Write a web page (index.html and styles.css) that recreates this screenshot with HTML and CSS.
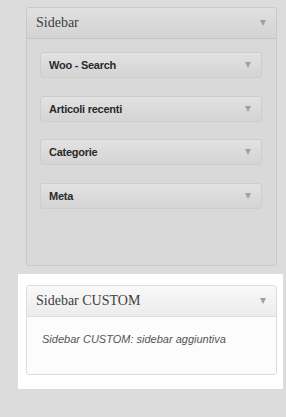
FILE: index.html
```html
<!DOCTYPE html>
<html>
<head>
    <title>Widget</title>
    <link rel="stylesheet" href="styles.css">
</head>
<body>
    <div class="sidebar-box">
        <div class="box-head">
            <h3>Sidebar</h3>
            <span class="arrow"></span>
        </div>
        <div class="box-body">
            <div class="widget"><span>Woo - Search</span><span class="arrow"></span></div>
            <div class="widget"><span>Articoli recenti</span><span class="arrow"></span></div>
            <div class="widget"><span>Categorie</span><span class="arrow"></span></div>
            <div class="widget"><span>Meta</span><span class="arrow"></span></div>
        </div>
    </div>
    <div class="highlight">
        <div class="custom-box">
            <div class="box-head">
                <h3>Sidebar CUSTOM</h3>
                <span class="arrow"></span>
            </div>
            <div class="custom-body">
                <p>Sidebar CUSTOM: sidebar aggiuntiva</p>
            </div>
        </div>
    </div>
</body>
</html>
```

FILE: styles.css
```css
body {
    margin: 0;
    background-color: #dcdcdc;
    font-family: "Liberation Sans", Arial, sans-serif;
}

.sidebar-box {
    margin: 7px 9px 0 26px;
    height: 257px;
    border: 1px solid #c8c8c8;
    border-radius: 3px;
    background-color: #d9d9d9;
}

.box-head {
    display: flex;
    align-items: center;
    justify-content: space-between;
    height: 30px;
    padding: 0 10px 0 9px;
    border-bottom: 1px solid #c6c6c6;
    background: linear-gradient(#e0e0e0, #d3d3d3);
    border-radius: 3px 3px 0 0;
}

.box-head h3 {
    margin: 0;
    font-family: "Liberation Serif", "Times New Roman", serif;
    font-weight: normal;
    font-size: 14px;
    color: #3f3f3f;
}

.arrow {
    width: 0;
    height: 0;
    border-left: 3.5px solid transparent;
    border-right: 3.5px solid transparent;
    border-top: 6px solid #a0a0a0;
}

.box-body {
    padding: 13px 14px 0 13px;
}

.widget {
    display: flex;
    align-items: center;
    justify-content: space-between;
    height: 24px;
    margin-bottom: 17.5px;
    padding: 0 10px 0 8px;
    border: 1px solid #cdcdcd;
    border-radius: 3px;
    background: linear-gradient(#e2e2e2, #d4d4d4);
    font-size: 11px;
    font-weight: bold;
    letter-spacing: -0.25px;
    color: #2a2a2a;
}

.highlight {
    margin: 8px 3px 0 18px;
    padding: 11px 6px 14px 8px;
    background-color: #fff;
}

.custom-box {
    border: 1px solid #dcdcdc;
    border-radius: 3px;
    background-color: #fcfcfc;
}

.custom-box .box-head {
    border-bottom: 1px solid #dedede;
    background: linear-gradient(#f9f9f9, #ececec);
}

.custom-body {
    height: 57px;
    padding: 0 15px;
}

.custom-body p {
    margin: 0;
    padding-top: 14px;
    font-size: 11px;
    font-style: italic;
    line-height: 16px;
    color: #555;
}
```
